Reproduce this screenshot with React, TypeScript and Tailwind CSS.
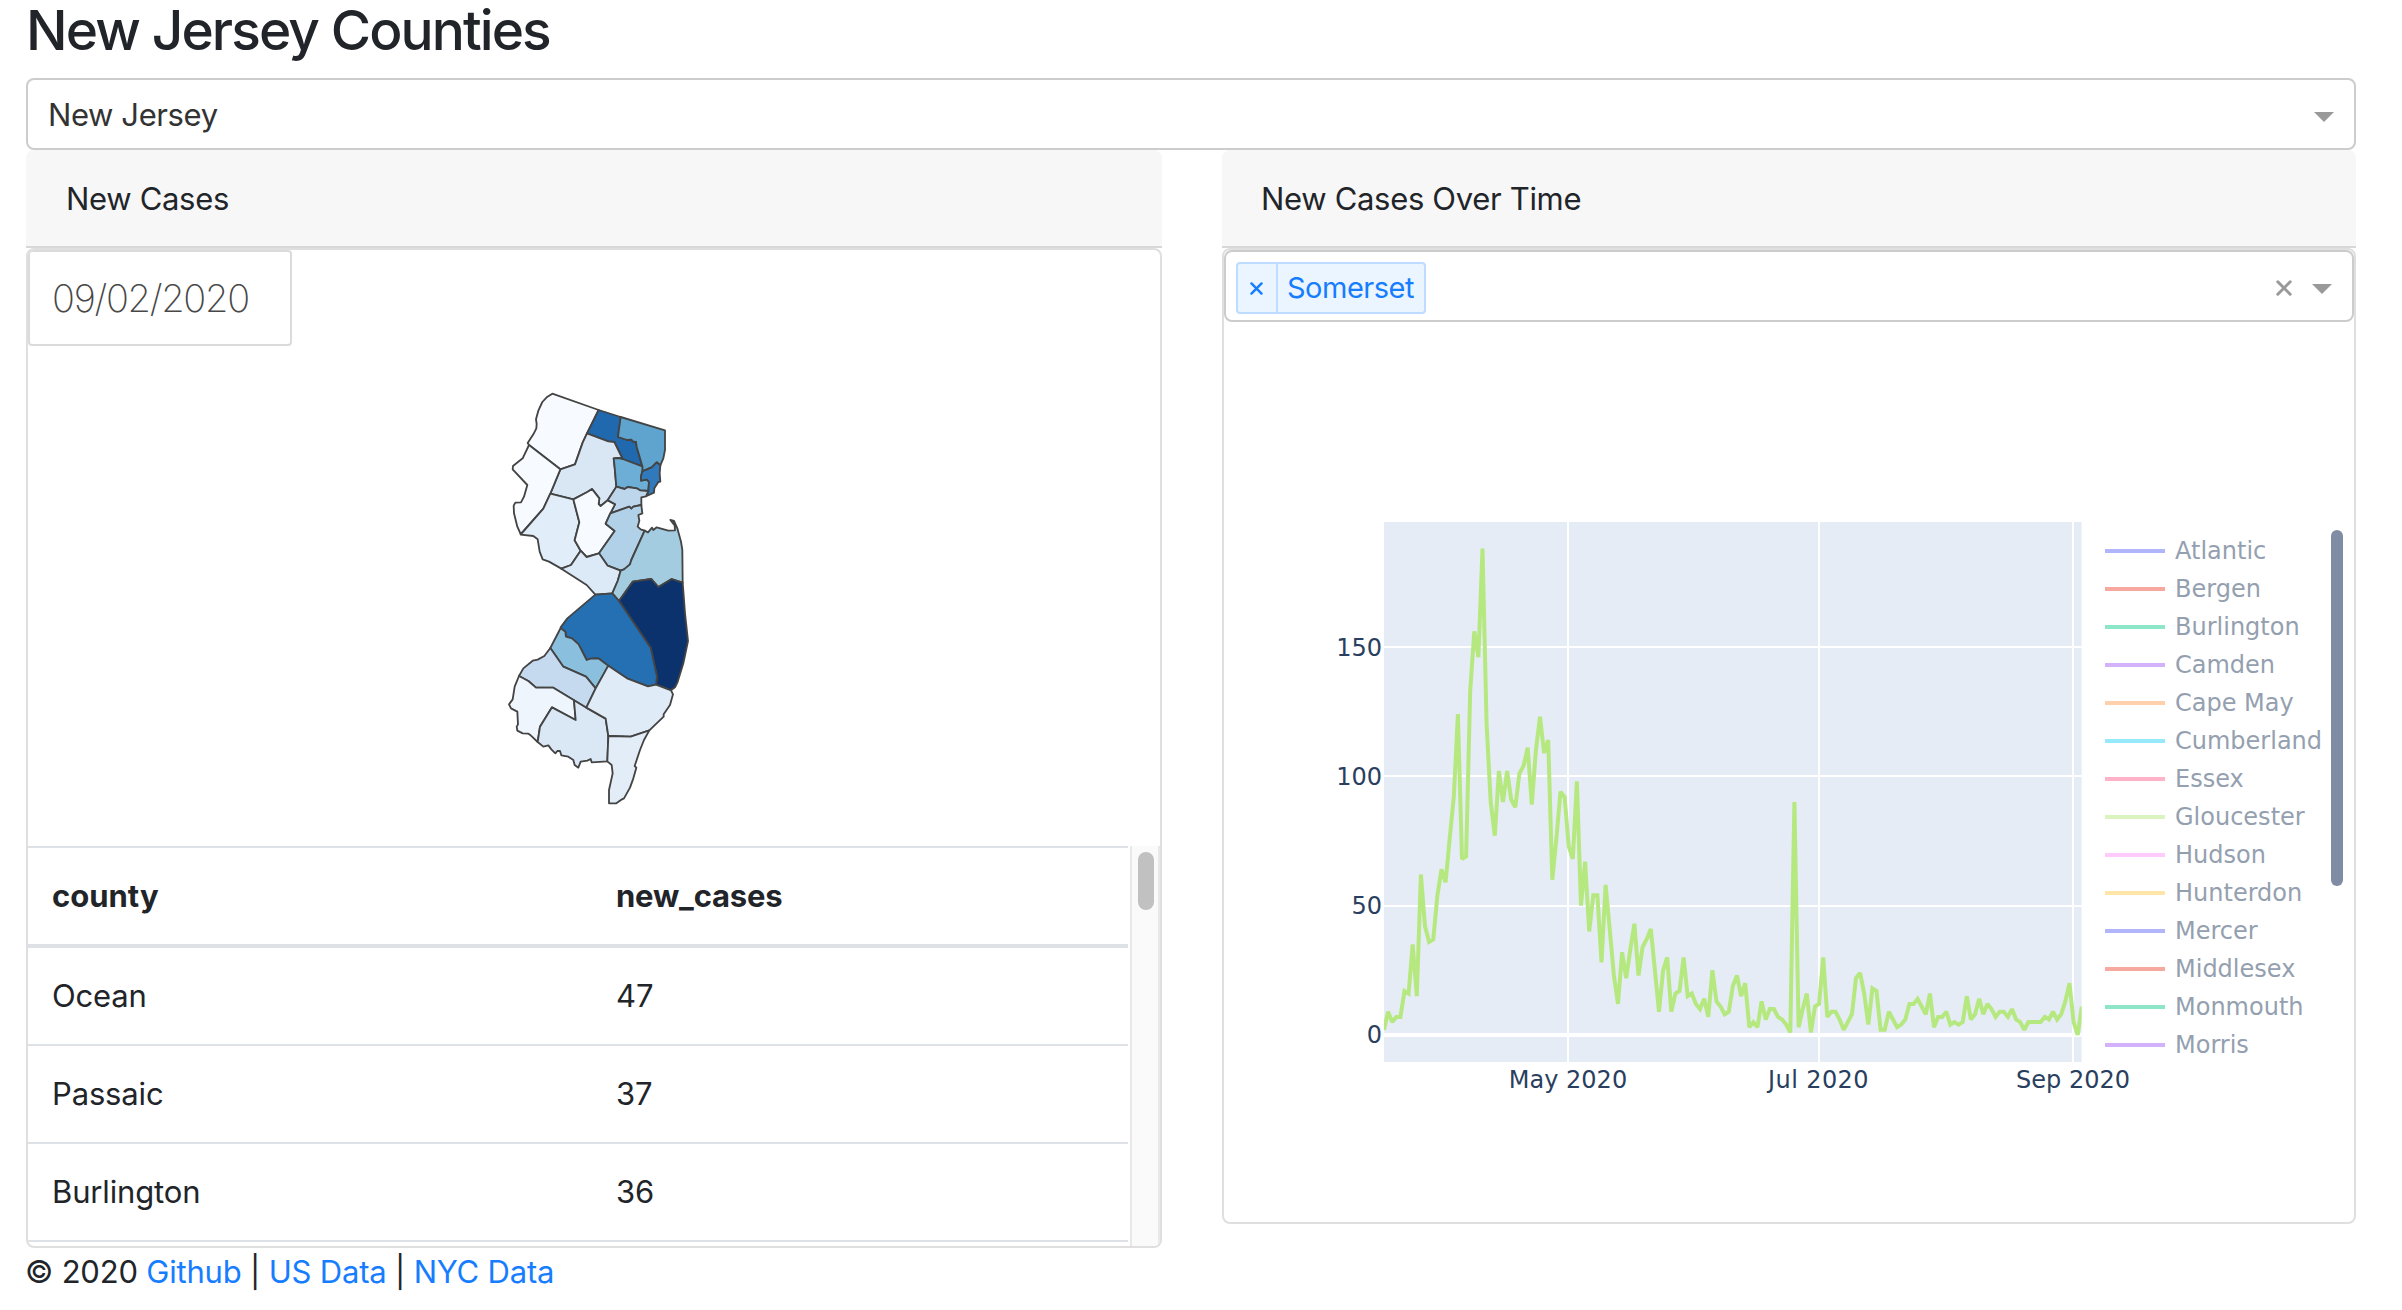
import React from "react";

type County = { name: string; fill: string; points: string };

const counties: County[] = [
  { name: "Sussex", fill: "#f7fbff", points: "187,41 326,90 291,160 278,188 255,253 211,268 117,195 113,189 130,163 139,145 140,132 138,118 145,92 157,66 170,52" },
  { name: "Passaic", fill: "#2069af", points: "326,90 392,111 384,171 412,180 424,179 428,184 438,186 440,200 457,259 398,237 373,186 355,184 291,160" },
  { name: "Bergen", fill: "#5fa4cf", points: "392,111 525,151 525,210 520,235 511,256 500,247 485,262 457,274 457,259 440,200 438,186 428,184 424,179 412,180 384,171" },
  { name: "Morris", fill: "#d9e7f5", points: "291,160 355,184 373,186 398,237 387,234 371,235 374,262 379,320 353,361 332,378 326,372 328,355 314,337 306,327 292,336 250,358 181,341 211,268 255,253 278,188" },
  { name: "Essex", fill: "#6caed6", points: "371,235 387,234 398,237 457,259 457,274 453,290 453,302 471,299 477,306 475,333 450,331 440,325 413,321 404,327 379,320 374,262" },
  { name: "Hudson", fill: "#3079ba", points: "457,274 485,262 500,247 511,256 509,280 511,305 505,306 493,325 492,338 470,348 475,333 477,306 471,299 453,302 453,290" },
  { name: "Union", fill: "#bed6ec", points: "379,320 404,327 413,321 440,325 450,331 475,333 468,349 454,352 454,375 430,380 424,386 418,380 361,400 375,373 353,361" },
  { name: "Warren", fill: "#f7fbff", points: "117,195 211,268 181,341 160,386 92,462 82,440 72,400 71,377 76,368 93,367 102,350 112,315 68,268 69,258 98,235" },
  { name: "Hunterdon", fill: "#e1edf8", points: "181,341 250,358 268,427 254,481 272,512 243,555 214,566 177,545 158,538 149,515 143,478 130,468 92,464 160,386" },
  { name: "Somerset", fill: "#f7fbff", points: "250,358 292,336 306,327 314,337 328,355 326,372 332,378 353,361 375,373 361,400 347,431 374,453 327,520 290,531 272,512 254,481 268,427" },
  { name: "Middlesex", fill: "#b0d1e7", points: "361,400 418,380 424,386 430,380 454,375 457,400 445,405 448,422 443,440 452,448 464,452 424,540 420,553 402,568 392,572 353,557 327,520 374,453 347,431" },
  { name: "Mercer", fill: "#dce9f6", points: "272,512 290,531 327,520 353,557 392,572 383,603 367,640 316,644 290,615 214,566 243,555" },
  { name: "Monmouth", fill: "#a3cce1", points: "464,452 474,457 486,443 490,450 500,442 535,452 555,451 554,436 541,420 552,423 562,445 573,485 577,510 578,608 545,597 505,621 484,597 428,605 387,663 367,640 383,603 392,572 402,568 420,553 424,540" },
  { name: "Ocean", fill: "#0b326c", points: "387,663 428,605 484,597 505,621 545,597 578,608 585,700 594,783 580,850 562,908 555,922 543,931 498,914 501,890 482,803" },
  { name: "Burlington", fill: "#2570b3", points: "316,644 367,640 387,663 482,803 501,890 498,914 474,919 413,896 355,857 325,835 302,836 290,840 266,793 246,775 228,770 226,755 214,750 212,742 232,715" },
  { name: "Camden", fill: "#8abfdd", points: "212,744 226,755 228,770 246,775 266,793 290,840 302,836 325,835 355,857 317,925 288,890 220,860 181,804" },
  { name: "Gloucester", fill: "#c5daef", points: "181,804 220,860 288,890 317,925 289,983 252,961 190,923 138,923 115,903 87,888 100,865 128,842 143,839 163,828" },
  { name: "Salem", fill: "#eef5fc", points: "87,888 115,903 138,923 190,923 252,961 257,1020 186,982 150,1040 143,1086 122,1066 115,1061 98,1060 82,1052 80,1040 84,1033 82,995 63,985 57,973 68,958 74,920" },
  { name: "Cumberland", fill: "#dae8f6", points: "252,961 289,983 347,1016 355,1068 352,1144 305,1147 302,1137 292,1142 272,1145 265,1163 254,1155 250,1140 235,1130 214,1126 210,1113 202,1113 196,1120 184,1108 175,1096 160,1100 143,1086 150,1040 186,982 257,1020" },
  { name: "Atlantic", fill: "#dfebf7", points: "289,983 317,925 355,857 413,896 474,919 498,914 543,931 549,943 540,975 521,1003 521,1010 478,1051 422,1070 355,1068 347,1016" },
  { name: "Cape May", fill: "#e2edf8", points: "355,1068 422,1070 478,1051 462,1080 450,1110 434,1158 439,1163 430,1195 420,1223 402,1255 396,1258 379,1270 357,1270 357,1230 368,1180 365,1155 352,1144" },
];

const cases = [
  2, 9, 5, 7, 7, 17, 16, 35, 15, 62, 42, 36, 37, 54, 64, 59, 76, 92, 124, 68, 69, 133, 156, 146, 188, 120, 90, 77, 102, 90,
  102, 91, 88, 101, 104, 111, 89, 110, 123, 109, 114, 60, 76, 94, 92, 73, 68, 98, 50, 67, 40, 54, 54, 28, 58, 41, 23, 12, 32,
  22, 33, 43, 23, 34, 37, 41, 25, 9, 25, 30, 9, 16, 17, 30, 15, 16, 12, 10, 14, 7, 25, 13, 11, 8, 9, 19, 23, 15, 20, 3, 5, 3,
  13, 6, 10, 10, 7, 6, 4, 1, 90, 3, 10, 16, 1, 11, 12, 30, 7, 9, 9, 6, 2, 5, 8, 22, 24, 16, 4, 18, 17, 2, 2, 9, 6, 3, 4, 6,
  12, 12, 14, 11, 8, 16, 3, 7, 7, 9, 4, 5, 4, 5, 15, 6, 8, 14, 8, 12, 10, 7, 9, 9, 7, 10, 6, 5, 2, 5, 5, 5, 5, 7, 6, 9, 6, 8,
  13, 20, 5, 0, 11,
];

const legend: [string, string][] = [
  ["Atlantic", "#b1b5fc"],
  ["Bergen", "#f7a89f"],
  ["Burlington", "#8ee6c9"],
  ["Camden", "#d4b1fb"],
  ["Cape May", "#ffd0ac"],
  ["Cumberland", "#96e9f9"],
  ["Essex", "#ffb2c8"],
  ["Gloucester", "#daf3bf"],
  ["Hudson", "#ffcbff"],
  ["Hunterdon", "#ffe5a8"],
  ["Mercer", "#b1b5fc"],
  ["Middlesex", "#f7a89f"],
  ["Monmouth", "#8ee6c9"],
  ["Morris", "#d4b1fb"],
];

const rows: [string, number][] = [
  ["Ocean", 47],
  ["Passaic", 37],
  ["Burlington", 36],
];

function CountyMap() {
  return (
    <svg className="ml-[462px] mt-[34px] h-[440px] w-[220px] shrink-0" viewBox="0 0 660 1320">
      {counties.map((c) => (
        <polygon key={c.name} points={c.points} fill={c.fill} stroke="#444" strokeWidth="5.5" strokeLinejoin="round" />
      ))}
    </svg>
  );
}

function CasesChart() {
  const line = cases.map((v, i) => `${(48 + i * 4.1045).toFixed(1)},${(525 - v * 2.588).toFixed(1)}`).join(" ");
  return (
    <svg className="h-[590px] w-[820px] shrink-0" viewBox="0 0 820 590" fontFamily="'DejaVu Sans', Verdana, sans-serif" fontSize="24" fill="#2a3f5f">
      <defs>
        <clipPath id="plot">
          <rect x="48" y="12" width="697.6" height="540" />
        </clipPath>
      </defs>
      <rect x="48" y="12" width="697.6" height="540" fill="#e5ecf6" />
      <path d="M232 12V552M483 12V552M737 12V552M48 137H745.6M48 266H745.6M48 396H745.6" stroke="#fff" strokeWidth="2" />
      <path d="M48 525H745.6" stroke="#fff" strokeWidth="4" />
      <polyline points={line} clipPath="url(#plot)" fill="none" stroke="#b6e880" strokeWidth="4" strokeMiterlimit="2" />
      <g textAnchor="end">
        <text x="46" y="146">150</text>
        <text x="46" y="275">100</text>
        <text x="46" y="404">50</text>
        <text x="46" y="533">0</text>
      </g>
      <g textAnchor="middle">
        <text x="232" y="578">May 2020</text>
        <text x="482.5" y="578" letterSpacing="0.4">Jul 2020</text>
        <text x="737" y="578">Sep 2020</text>
      </g>
    </svg>
  );
}

function CardHeader({ children }: { children: React.ReactNode }) {
  return (
    <div className="flex h-[98px] items-center rounded-t-lg border-b-2 border-[#d8d8d8] bg-[#f7f7f7] pt-[2px] pl-[39px] tracking-[-0.32px]">
      {children}
    </div>
  );
}

function Caret() {
  return (
    <svg className="mt-[6px] h-[10px] w-5" viewBox="0 0 20 10">
      <path d="M0 0H20L10 10Z" fill="#999" />
    </svg>
  );
}

function Cross({ className }: { className: string }) {
  return (
    <svg className={className} viewBox="0 0 16 16" stroke="currentColor" strokeWidth="3" strokeLinecap="round">
      <path d="M1.8 1.8L14.2 14.2M14.2 1.8L1.8 14.2" />
    </svg>
  );
}

export default function App() {
  return (
    <div className="h-[1310px] bg-white pl-[26px] pr-[46px] font-['Inter',sans-serif] text-[31px] leading-[48px] text-[#212529]">
      <h1 className="h-[78px] text-[55px] leading-[60px] font-medium tracking-[-1.9px]">New Jersey Counties</h1>
      <div className="flex h-[72px] items-center justify-between rounded-lg border-2 border-[#ccc] px-5 text-[#333]">
        <span className="pt-[2px] tracking-[-0.4px]">New Jersey</span>
        <Caret />
      </div>
      <div className="flex items-start gap-[60px]">
        <section className="w-[1136px]">
          <CardHeader>
            <span className="pl-px">New Cases</span>
          </CardHeader>
          <div className="flex h-[1000px] flex-col overflow-hidden rounded-lg border-2 border-[#dfdfdf]">
            <div className="flex h-24 w-[264px] shrink-0 items-center rounded-[4px] border-2 border-[#dbdbdb] pl-[22px] text-[38px] font-extralight tracking-[-1.3px] text-[#484848]">
              09/02/2020
            </div>
            <CountyMap />
            <div className="flex min-h-0 flex-1 pt-[26px]">
              <div className="flex w-[1100px] flex-col">
                <div className="grid h-[102px] shrink-0 grid-cols-2 items-center border-t-2 border-b-4 border-[#dee2e6] font-bold">
                  <span className="pl-6">county</span>
                  <span className="pl-[38px] tracking-[-0.2px]">new_cases</span>
                </div>
                {rows.map(([name, n]) => (
                  <div key={name} className="grid h-[98px] shrink-0 grid-cols-2 items-center border-b-2 border-[#dee2e6] tracking-[-0.15px]">
                    <span className="pl-6">{name}</span>
                    <span className="pl-[38px]">{n}</span>
                  </div>
                ))}
              </div>
              <div className="ml-[2px] w-[30px] border-x-2 border-[#e8e8e8] bg-[#fafafa] pt-[6px] pl-[6px]">
                <div className="h-[58px] w-4 rounded-full bg-[#c1c1c1]" />
              </div>
            </div>
          </div>
        </section>
        <section className="w-[1134px]">
          <CardHeader>New Cases Over Time</CardHeader>
          <div className="h-[976px] rounded-lg border-2 border-[#dfdfdf]">
            <div className="flex h-[72px] items-center rounded-lg border-2 border-[#ccc] pr-5 pl-[10px]">
              <div className="mt-1 flex h-[52px] w-[190px] items-center rounded-[4px] border-2 border-[#bedcff] bg-[#ebf5ff] text-[29px] tracking-[-0.5px] text-[#177dff]">
                <div className="flex w-10 items-center justify-center self-stretch border-r-2 border-[#bedcff]">
                  <Cross className="mr-px size-[13px]" />
                </div>
                <span className="pl-[9px]">Somerset</span>
              </div>
              <Cross className="mt-1 mr-5 ml-auto size-4 text-[#999]" />
              <Caret />
            </div>
            <div className="flex pt-[188px] pl-[112px] font-['DejaVu_Sans',Verdana,sans-serif] text-2xl text-[#94a0af]">
              <CasesChart />
              <div className="-ml-[51px] flex w-[220px] flex-col pt-[22px]">
                {legend.map(([name, color]) => (
                  <div key={name} className="flex h-[38px] items-center gap-[10px] whitespace-nowrap">
                    <span className="h-1 w-[60px] shrink-0" style={{ backgroundColor: color }} />
                    {name}
                  </div>
                ))}
              </div>
              <div className="mt-5 ml-[6px] h-[356px] w-3 rounded-[6px] bg-[#808ba4]" />
            </div>
          </div>
        </section>
      </div>
      <footer className="-ml-px h-12 tracking-[-0.2px]">
        © 2020 <a className="text-[#177dff]">Github</a> | <a className="text-[#177dff]">US Data</a> |{" "}
        <a className="text-[#177dff]">NYC Data</a>
      </footer>
    </div>
  );
}
